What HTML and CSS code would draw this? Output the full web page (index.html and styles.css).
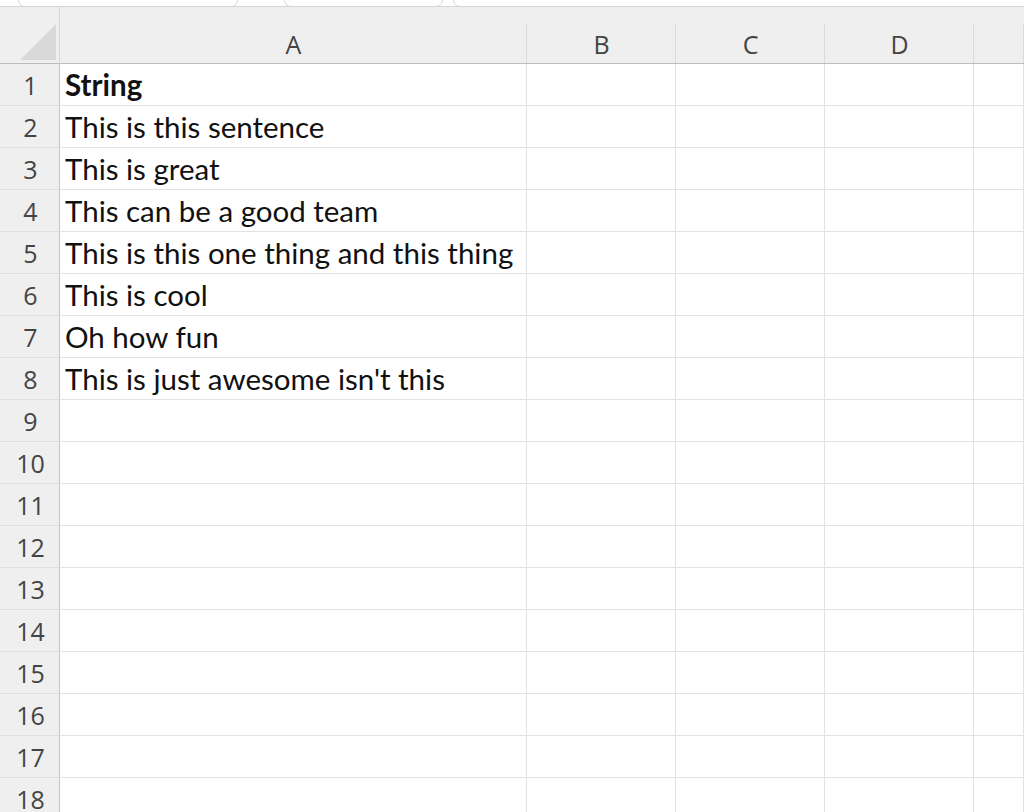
FILE: index.html
```html
<!DOCTYPE html>
<html lang="en">
<head>
    <meta charset="UTF-8">
    <title>Sheet1</title>
    <link rel="stylesheet" href="styles.css">
</head>
<body>
    <!-- Barra de caixas acima da planilha -->
    <div class="toolbar">
        <div class="box box-name"></div>
        <div class="box box-fx"></div>
        <div class="box box-formula"></div>
    </div>

    <div class="sheet">
        <div class="corner"><span class="tri"></span></div>
        <div class="colhead">A</div>
        <div class="colhead">B</div>
        <div class="colhead">C</div>
        <div class="colhead">D</div>
        <div class="colhead"></div>

        <div class="rowhead">1</div><div class="cell bold">String</div><div class="cell"></div><div class="cell"></div><div class="cell"></div><div class="cell"></div>
        <div class="rowhead">2</div><div class="cell">This is this sentence</div><div class="cell"></div><div class="cell"></div><div class="cell"></div><div class="cell"></div>
        <div class="rowhead">3</div><div class="cell">This is great</div><div class="cell"></div><div class="cell"></div><div class="cell"></div><div class="cell"></div>
        <div class="rowhead">4</div><div class="cell">This can be a good team</div><div class="cell"></div><div class="cell"></div><div class="cell"></div><div class="cell"></div>
        <div class="rowhead">5</div><div class="cell">This is this one thing and this thing</div><div class="cell"></div><div class="cell"></div><div class="cell"></div><div class="cell"></div>
        <div class="rowhead">6</div><div class="cell">This is cool</div><div class="cell"></div><div class="cell"></div><div class="cell"></div><div class="cell"></div>
        <div class="rowhead">7</div><div class="cell">Oh how fun</div><div class="cell"></div><div class="cell"></div><div class="cell"></div><div class="cell"></div>
        <div class="rowhead">8</div><div class="cell">This is just awesome isn't this</div><div class="cell"></div><div class="cell"></div><div class="cell"></div><div class="cell"></div>
        <div class="rowhead">9</div><div class="cell"></div><div class="cell"></div><div class="cell"></div><div class="cell"></div><div class="cell"></div>
        <div class="rowhead">10</div><div class="cell"></div><div class="cell"></div><div class="cell"></div><div class="cell"></div><div class="cell"></div>
        <div class="rowhead">11</div><div class="cell"></div><div class="cell"></div><div class="cell"></div><div class="cell"></div><div class="cell"></div>
        <div class="rowhead">12</div><div class="cell"></div><div class="cell"></div><div class="cell"></div><div class="cell"></div><div class="cell"></div>
        <div class="rowhead">13</div><div class="cell"></div><div class="cell"></div><div class="cell"></div><div class="cell"></div><div class="cell"></div>
        <div class="rowhead">14</div><div class="cell"></div><div class="cell"></div><div class="cell"></div><div class="cell"></div><div class="cell"></div>
        <div class="rowhead">15</div><div class="cell"></div><div class="cell"></div><div class="cell"></div><div class="cell"></div><div class="cell"></div>
        <div class="rowhead">16</div><div class="cell"></div><div class="cell"></div><div class="cell"></div><div class="cell"></div><div class="cell"></div>
        <div class="rowhead">17</div><div class="cell"></div><div class="cell"></div><div class="cell"></div><div class="cell"></div><div class="cell"></div>
        <div class="rowhead">18</div><div class="cell"></div><div class="cell"></div><div class="cell"></div><div class="cell"></div><div class="cell"></div>
    </div>
</body>
</html>
```

FILE: styles.css
```css
body {
    margin: 0;
    padding: 0;
    width: 1024px;
    height: 812px;
    overflow: hidden;
    background: #ffffff;
    font-family: Lato, "Open Sans", sans-serif;
}
.toolbar {
    display: flex;
    height: 6px;
    border-bottom: 1px solid #d4d4d4;
    background: #ffffff;
    overflow: hidden;
}
.box {
    height: 5px;
    margin-top: -8px;
    padding-top: 8px;
    border: 1px solid #d6d6d6;
    border-radius: 0 0 7px 7px;
    background: #ffffff;
}
.box-name {
    margin-left: 18px;
    width: 218px;
}
.box-fx {
    margin-left: 46px;
    width: 157px;
}
.box-formula {
    margin-left: 10px;
    flex: 1;
    margin-right: -20px;
}
.sheet {
    display: grid;
    grid-template-columns: 60px 467px 149px 149px 149px 50px;
    grid-template-rows: 57px repeat(18, 42px);
}
.corner {
    position: relative;
    background: #efefef;
    border-right: 1px solid #d8d8d8;
    border-bottom: 1px solid #bdbdbd;
}
.tri {
    position: absolute;
    right: 3px;
    bottom: 3px;
    width: 0;
    height: 0;
    border-left: 36px solid transparent;
    border-bottom: 36px solid #d9d9d9;
}
.colhead {
    position: relative;
    background: #efefef;
    border-bottom: 1px solid #bdbdbd;
    color: #444444;
    font-family: "Open Sans", sans-serif;
    font-size: 25px;
    display: flex;
    align-items: center;
    justify-content: center;
    padding-top: 18px;
    box-sizing: border-box;
}
.colhead::after {
    content: "";
    position: absolute;
    right: 0;
    top: 17px;
    bottom: 0;
    border-right: 1px solid #dadada;
}
.rowhead {
    background: #efefef;
    border-right: 1px solid #c4c4c4;
    border-bottom: 1px solid #e0e0e0;
    color: #444444;
    font-family: "Open Sans", sans-serif;
    font-size: 25px;
    display: flex;
    align-items: center;
    justify-content: center;
    padding-left: 2px;
}
.cell {
    border-right: 1px solid #e2e2e2;
    border-bottom: 1px solid #e2e2e2;
    font-size: 29.5px;
    color: #111111;
    padding-left: 5px;
    display: flex;
    align-items: center;
    white-space: nowrap;
}
.bold {
    font-weight: bold;
}
```
